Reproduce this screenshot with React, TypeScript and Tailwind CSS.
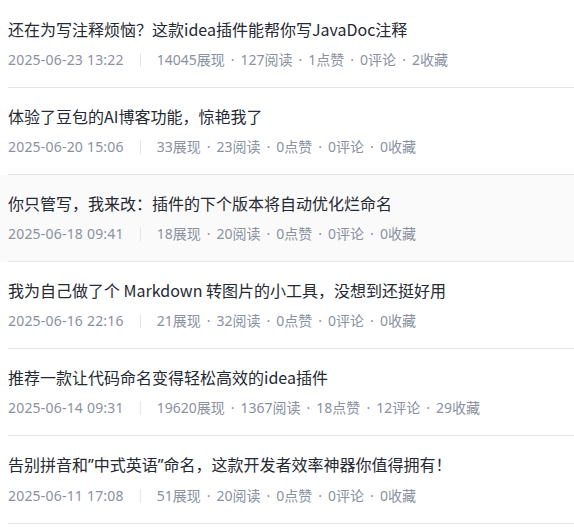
import React from "react";

type Item = {
  title: React.ReactNode;
  time: string;
  stats: string[];
  active?: boolean;
};

const Q = ({ c }: { c: string }) => (
  <span style={{ fontFamily: '"Noto Sans", sans-serif' }}>{c}</span>
);

const items: Item[] = [
  {
    title: "还在为写注释烦恼？这款idea插件能帮你写JavaDoc注释",
    time: "2025-06-23 13:22",
    stats: ["14045展现", "127阅读", "1点赞", "0评论", "2收藏"],
  },
  {
    title: "体验了豆包的AI博客功能，惊艳我了",
    time: "2025-06-20 15:06",
    stats: ["33展现", "23阅读", "0点赞", "0评论", "0收藏"],
  },
  {
    title: "你只管写，我来改：插件的下个版本将自动优化烂命名",
    time: "2025-06-18 09:41",
    stats: ["18展现", "20阅读", "0点赞", "0评论", "0收藏"],
    active: true,
  },
  {
    title: "我为自己做了个 Markdown 转图片的小工具，没想到还挺好用",
    time: "2025-06-16 22:16",
    stats: ["21展现", "32阅读", "0点赞", "0评论", "0收藏"],
  },
  {
    title: "推荐一款让代码命名变得轻松高效的idea插件",
    time: "2025-06-14 09:31",
    stats: ["19620展现", "1367阅读", "18点赞", "12评论", "29收藏"],
  },
  {
    title: (
      <>
        告别拼音和<Q c="”" />中式英语<Q c="”" />命名，这款开发者效率神器你值得拥有！
      </>
    ),
    time: "2025-06-11 17:08",
    stats: ["51展现", "20阅读", "0点赞", "0评论", "0收藏"],
  },
];

export default function App() {
  return (
    <div
      className="w-[574px] h-[530px] bg-white pt-px overflow-hidden"
      style={{ fontFamily: '"Noto Sans CJK SC", "Noto Sans", sans-serif' }}
    >
      {items.map((it, i) => (
        <div key={i} className={it.active ? "bg-[#fafafa] pl-2" : "pl-2"}>
          <div className="border-b border-[#e4e6eb] pt-4 pb-4">
            <div className="text-[16px] leading-[24px] text-[#252933] whitespace-nowrap">
              {it.title}
            </div>
            <div
              className="mt-2 flex items-center text-[14px] leading-[22px] text-[#8a919f] whitespace-nowrap"
              style={{ fontFamily: '"Noto Sans", "Noto Sans CJK SC", sans-serif' }}
            >
              <span className="tracking-[0.2px]">{it.time}</span>
              <span className="mx-4 w-px h-[14px] bg-[#e4e6eb]" />
              {it.stats.map((s, j) => (
                <React.Fragment key={j}>
                  {j > 0 && <span className="mx-[6px]">·</span>}
                  <span>{s}</span>
                </React.Fragment>
              ))}
            </div>
          </div>
        </div>
      ))}
    </div>
  );
}
